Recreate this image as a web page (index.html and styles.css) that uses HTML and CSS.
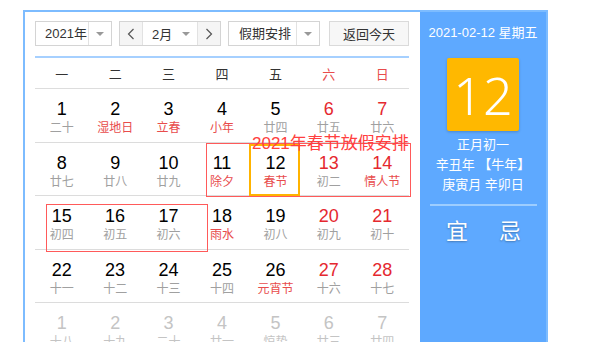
FILE: index.html
```html
<!DOCTYPE html>
<html lang="zh-CN">

<head>
    <meta charset="UTF-8">
    <meta name="viewport" content="width=device-width, initial-scale=1">
    <title>万年历</title>
    <link rel="stylesheet" href="styles.css">
</head>

<body>
    <div class="calendar">
        <div class="month-pane">
            <div class="toolbar">
                <div class="select year">
                    <span class="select-text">2021年</span>
                    <span class="select-arrow"><i class="caret"></i></span>
                </div>

                <div class="month-picker">
                    <span class="nav">
                        <svg width="8" height="12" viewBox="0 0 8 12"><polyline points="6.5,1 1.5,6 6.5,11" fill="none" stroke="#555" stroke-width="1.2"/></svg>
                    </span>
                    <span class="month-select">
                        <span>2月</span>
                        <i class="caret"></i>
                    </span>
                    <span class="nav">
                        <svg width="8" height="12" viewBox="0 0 8 12"><polyline points="1.5,1 6.5,6 1.5,11" fill="none" stroke="#555" stroke-width="1.2"/></svg>
                    </span>
                </div>

                <div class="select holiday">
                    <span class="select-text">假期安排</span>
                    <span class="select-arrow"><i class="caret"></i></span>
                </div>

                <button class="today-btn">返回今天</button>
            </div>

            <div class="week-head">
                <span>一</span><span>二</span><span>三</span><span>四</span><span>五</span>
                <span class="weekend">六</span><span class="weekend">日</span>
            </div>

            <div class="days">
                <!-- 第一周 -->
                <div class="day"><span class="num">1</span><span class="lunar">二十</span></div>
                <div class="day"><span class="num">2</span><span class="lunar festival">湿地日</span></div>
                <div class="day"><span class="num">3</span><span class="lunar festival">立春</span></div>
                <div class="day"><span class="num">4</span><span class="lunar festival">小年</span></div>
                <div class="day"><span class="num">5</span><span class="lunar">廿四</span></div>
                <div class="day weekend"><span class="num">6</span><span class="lunar">廿五</span></div>
                <div class="day weekend"><span class="num">7</span><span class="lunar">廿六</span></div>
                <!-- 第二周 -->
                <div class="day"><span class="num">8</span><span class="lunar">廿七</span></div>
                <div class="day"><span class="num">9</span><span class="lunar">廿八</span></div>
                <div class="day"><span class="num">10</span><span class="lunar">廿九</span></div>
                <div class="day"><span class="num">11</span><span class="lunar festival">除夕</span></div>
                <div class="day today"><span class="num">12</span><span class="lunar festival">春节</span></div>
                <div class="day weekend"><span class="num">13</span><span class="lunar">初二</span></div>
                <div class="day weekend"><span class="num">14</span><span class="lunar festival">情人节</span></div>
                <!-- 第三周 -->
                <div class="day"><span class="num">15</span><span class="lunar">初四</span></div>
                <div class="day"><span class="num">16</span><span class="lunar">初五</span></div>
                <div class="day"><span class="num">17</span><span class="lunar">初六</span></div>
                <div class="day"><span class="num">18</span><span class="lunar festival">雨水</span></div>
                <div class="day"><span class="num">19</span><span class="lunar">初八</span></div>
                <div class="day weekend"><span class="num">20</span><span class="lunar">初九</span></div>
                <div class="day weekend"><span class="num">21</span><span class="lunar">初十</span></div>
                <!-- 第四周 -->
                <div class="day"><span class="num">22</span><span class="lunar">十一</span></div>
                <div class="day"><span class="num">23</span><span class="lunar">十二</span></div>
                <div class="day"><span class="num">24</span><span class="lunar">十三</span></div>
                <div class="day"><span class="num">25</span><span class="lunar">十四</span></div>
                <div class="day"><span class="num">26</span><span class="lunar festival">元宵节</span></div>
                <div class="day weekend"><span class="num">27</span><span class="lunar">十六</span></div>
                <div class="day weekend"><span class="num">28</span><span class="lunar">十七</span></div>
                <!-- 下个月 -->
                <div class="day other"><span class="num">1</span><span class="lunar">十八</span></div>
                <div class="day other"><span class="num">2</span><span class="lunar">十九</span></div>
                <div class="day other"><span class="num">3</span><span class="lunar">二十</span></div>
                <div class="day other"><span class="num">4</span><span class="lunar">廿一</span></div>
                <div class="day other"><span class="num">5</span><span class="lunar">惊蛰</span></div>
                <div class="day other"><span class="num">6</span><span class="lunar">廿三</span></div>
                <div class="day other"><span class="num">7</span><span class="lunar">廿四</span></div>
            </div>

            <!-- 标注 -->
            <div class="mark mark-spring"></div>
            <div class="mark mark-work"></div>
            <div class="mark-text">2021年春节放假安排</div>
        </div>

        <aside class="info">
            <div class="info-date">2021-02-12 星期五</div>
            <div class="info-day">12</div>
            <div class="info-lunar">
                <p>正月初一</p>
                <p>辛丑年 【牛年】</p>
                <p>庚寅月 辛卯日</p>
            </div>
            <div class="info-yiji">
                <span>宜</span><span>忌</span>
            </div>
        </aside>
    </div>
</body>

</html>
```

FILE: styles.css
```css
html,
body {
    margin: 0;
    overflow: hidden;
}

body {
    font-family: "Liberation Sans", "Noto Sans CJK SC", sans-serif;
    background-color: #fff;
    color: #333;
}

.calendar {
    display: flex;
    width: 525px;
    height: 380px;
    margin: 10px 0 0 23px;
    border: 2px solid #7dbcff;
    box-sizing: border-box;
}

.month-pane {
    position: relative;
    width: 395px;
    padding: 9px 11px 0 10px;
    box-sizing: border-box;
}

/* 工具栏 */
.toolbar {
    display: flex;
    height: 25px;
    font-size: 13px;
}

.select {
    display: flex;
    border: 1px solid #d4d4d4;
    box-sizing: border-box;
    background: #fff;
}

.select-text {
    flex: 1;
    line-height: 23px;
    padding-left: 9px;
}

.select-arrow {
    width: 22px;
    border-left: 1px solid #e2e2e2;
    display: flex;
    align-items: center;
    justify-content: center;
}

.caret {
    display: inline-block;
    width: 0;
    height: 0;
    border-left: 4px solid transparent;
    border-right: 4px solid transparent;
    border-top: 4px solid #999;
}

.year {
    width: 77px;
}

.holiday {
    width: 92px;
    margin-left: 7px;
}

.holiday .select-text {
    padding-left: 10px;
}

.month-picker {
    display: flex;
    width: 102px;
    margin-left: 7px;
    border: 1px solid #d4d4d4;
    box-sizing: border-box;
}

.nav {
    width: 22px;
    background: #f5f5f5;
    display: flex;
    align-items: center;
    justify-content: center;
}

.month-select {
    flex: 1;
    display: flex;
    align-items: center;
    justify-content: space-between;
    padding: 0 7px 0 9px;
    border-left: 1px solid #e2e2e2;
    border-right: 1px solid #e2e2e2;
    background: #fff;
}

.today-btn {
    width: 80px;
    margin-left: 9px;
    padding: 0;
    font-family: inherit;
    font-size: 13px;
    color: #333;
    background: #f7f7f7;
    border: 1px solid #dadada;
}

/* 星期 */
.week-head {
    display: grid;
    grid-template-columns: repeat(7, 1fr);
    margin-top: 10px;
    height: 33px;
    border-top: 2px solid #a6d0ff;
    border-bottom: 1px solid #ddd;
    box-sizing: border-box;
    align-items: center;
    text-align: center;
    font-size: 13px;
    color: #333;
}

.week-head .weekend {
    color: #e84c4c;
}

/* 日期 */
.days {
    display: grid;
    grid-template-columns: repeat(7, 1fr);
}

.day {
    position: relative;
    height: 53.5px;
    padding-top: 10px;
    border-bottom: 1px solid #dcdcdc;
    box-sizing: border-box;
    text-align: center;
}

.day .num {
    display: block;
    font-size: 18px;
    line-height: 21px;
    color: #000;
}

.day .lunar {
    display: block;
    font-size: 12px;
    line-height: 16px;
    color: #a0a0a0;
}

.day .lunar.festival {
    color: #e84c4c;
}

.day.weekend .num {
    color: #e5282f;
}

.day.other .num,
.day.other .lunar {
    color: #c4c4c4;
}

.day.today::after {
    content: "";
    position: absolute;
    top: 1px;
    left: 0;
    right: 2px;
    bottom: -1px;
    border: 2px solid #ffb300;
}

/* 标注 */
.mark {
    position: absolute;
    border: 1px solid #ff5a5a;
    box-sizing: border-box;
}

.mark-spring {
    left: 181px;
    top: 131px;
    width: 205px;
    height: 54px;
}

.mark-work {
    left: 21px;
    top: 192px;
    width: 162px;
    height: 48px;
}

.mark-text {
    position: absolute;
    left: 227px;
    top: 122px;
    font-size: 17px;
    line-height: 20px;
    color: #ff4040;
    white-space: nowrap;
}

/* 右侧信息 */
.info {
    width: 126px;
    background-color: #5ea9ff;
    color: #fff;
    text-align: center;
    padding-top: 11px;
    box-sizing: border-box;
}

.info-date {
    font-size: 13px;
    line-height: 20px;
}

.info-day {
    width: 72px;
    height: 73px;
    margin: 15px auto 0;
    background-color: #ffb800;
    border-radius: 2px;
    box-shadow: 0 1px 3px rgba(0, 0, 0, 0.2);
    font-size: 52px;
    line-height: 73px;
    font-weight: 300;
    font-family: "Noto Sans", "Liberation Sans", sans-serif;
}

.info-lunar {
    margin-top: 4px;
    font-size: 13px;
    line-height: 20px;
}

.info-lunar p {
    margin: 0;
}

.info-yiji {
    display: flex;
    justify-content: center;
    gap: 31px;
    margin: 9px 9px 0 10px;
    padding-top: 11px;
    border-top: 2px solid #9dcdff;
    font-size: 22px;
    line-height: 30px;
    text-shadow: 0 1px 2px rgba(0, 0, 0, 0.3);
}
```
